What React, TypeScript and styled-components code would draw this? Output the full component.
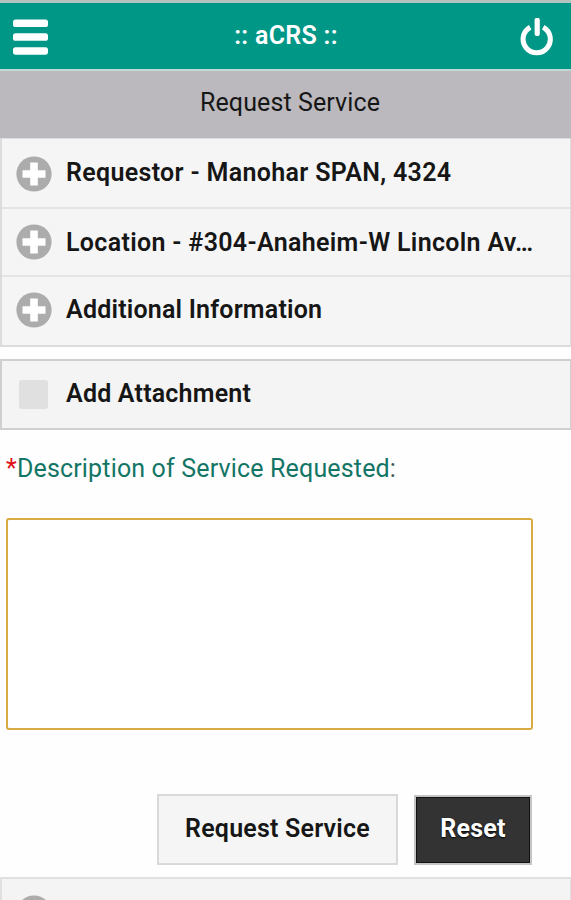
import { createGlobalStyle, styled } from "styled-components";

const sections = [
  {
    title: "Requestor - Manohar SPAN, 4324",
    height: 68,
    padding: "2px 36px 0 14px",
    lift: 4,
    spacing: 0.33,
  },
  {
    title: "Location - #304-Anaheim-W Lincoln Av…",
    height: 68,
    padding: "0 36px 0 14px",
    lift: 0,
    spacing: 0.33,
  },
  {
    title: "Additional Information",
    height: 70,
    padding: "0 36px 2px 14px",
    lift: 1,
    spacing: 0.2,
  },
];

const MenuIcon = () => (
  <svg width="36" height="36" viewBox="0 0 36 36" fill="#fff">
    <rect x="0" y="0.5" width="35" height="7.5" rx="2.6" />
    <rect x="0" y="14.3" width="35" height="7.5" rx="2.6" />
    <rect x="0" y="28.2" width="35" height="7.5" rx="2.6" />
  </svg>
);

const PowerIcon = () => (
  <svg width="34" height="38" viewBox="0 0 34 38" fill="none" stroke="#fff">
    <path d="M10.2 9.2A13.6 13.6 0 1 0 23.2 9.2" strokeWidth="5" />
    <path d="M17.2 2.3V15.5" strokeWidth="5.2" strokeLinecap="round" />
  </svg>
);

const PlusIcon = () => (
  <svg width="36" height="36" viewBox="0 0 36 36">
    <circle cx="18" cy="18" r="17.6" fill="#acacac" />
    <path d="M18 6.5V29.5M6.5 18H29.5" stroke="#fff" strokeWidth="7.6" />
  </svg>
);

const App = () => {
  return (
    <>
      <GlobalStyle />
      <Page>
        <Header>
          <IconButton aria-label="Menu">
            <MenuIcon />
          </IconButton>
          <Logo>:: aCRS ::</Logo>
          <IconButton aria-label="Log out">
            <PowerIcon />
          </IconButton>
        </Header>
        <PageTitle>Request Service</PageTitle>

        <SectionList>
          {sections.map(({ title, height, padding, lift, spacing }) => (
            <SectionRow key={title} $height={height} $padding={padding}>
              <PlusIcon />
              <RowText $lift={lift} $spacing={spacing}>
                {title}
              </RowText>
            </SectionRow>
          ))}
        </SectionList>

        <Attachment>
          <CheckBox />
          <RowText $lift={2} $spacing={0.2}>
            Add Attachment
          </RowText>
        </Attachment>

        <Label htmlFor="description">
          <Required>*</Required>Description of Service Requested
          <Colon>:</Colon>
        </Label>
        <Description id="description" />

        <Actions>
          <SubmitButton>Request Service</SubmitButton>
          <ResetButton>Reset</ResetButton>
        </Actions>

        <NextSection>
          <PlusIcon />
        </NextSection>
      </Page>
    </>
  );
};

export default App;

const GlobalStyle = createGlobalStyle`
  * {
    box-sizing: border-box;
  }

  body {
    margin: 0;
    background: #fefefe;
    font-family: Roboto, "Liberation Sans", sans-serif;
    font-size: 25px;
    letter-spacing: 0.2px;
    color: #161616;
    overflow: hidden;
  }
`;

const Page = styled.div`
  display: flex;
  flex-direction: column;
  height: 900px;
  overflow: hidden;
`;

const Header = styled.header`
  display: flex;
  flex-shrink: 0;
  align-items: center;
  justify-content: space-between;
  height: 71px;
  padding: 1px 17px 0 13px;
  border-top: 3px solid #b3c3bf;
  border-bottom: 2px solid #c3d9d6;
  background: #009787;
`;

const IconButton = styled.button`
  display: flex;
  padding: 0;
  border: none;
  background: none;
`;

const Logo = styled.h1`
  margin: 0 0 3px;
  padding-left: 3px;
  font-size: 25px;
  font-weight: 600;
  letter-spacing: 0.3px;
  color: #fff;
`;

const PageTitle = styled.h2`
  flex-shrink: 0;
  height: 67px;
  margin: 0;
  padding-left: 9px;
  background: #bbb9bd;
  font-size: 25px;
  font-weight: 400;
  line-height: 63px;
  letter-spacing: 0.1px;
  text-align: center;
`;

const SectionList = styled.div`
  flex-shrink: 0;
  height: 209px;
  border: 1px solid #dcdcdc;
  border-width: 1px 1px 2px 2px;
`;

const SectionRow = styled.div<{ $height: number; $padding: string }>`
  display: flex;
  align-items: center;
  gap: 14px;
  height: ${({ $height }) => $height}px;
  padding: ${({ $padding }) => $padding};
  background: #f5f5f5;

  & + & {
    border-top: 2px solid #e4e4e4;
  }
`;

const RowText = styled.span<{ $lift: number; $spacing: number }>`
  margin-bottom: ${({ $lift }) => $lift}px;
  font-weight: 600;
  letter-spacing: ${({ $spacing }) => $spacing}px;
  white-space: nowrap;
`;

const Attachment = styled.div`
  display: flex;
  flex-shrink: 0;
  align-items: center;
  gap: 18px;
  height: 71px;
  margin-top: 12px;
  padding-left: 17px;
  border: 2px solid #cfcfcf;
  border-right-width: 1px;
  background: #f4f4f4;
`;

const CheckBox = styled.span`
  width: 29px;
  height: 29px;
  border-radius: 3px;
  background: #e0e0e0;
`;

const Label = styled.label`
  flex-shrink: 0;
  height: 88px;
  padding: 24px 0 0 6px;
  line-height: 30px;
  letter-spacing: 0.16px;
  color: #137565;
`;

const Required = styled.span`
  color: #e00f16;
`;

const Colon = styled.span`
  color: #3d5550;
`;

const Description = styled.textarea`
  flex-shrink: 0;
  width: 527px;
  height: 212px;
  margin-left: 6px;
  border: 2px solid #d9aa42;
  border-radius: 3px;
  background: #fff;
  outline: none;
  resize: none;
`;

const Actions = styled.div`
  display: flex;
  flex-shrink: 0;
  align-items: center;
  justify-content: flex-end;
  gap: 16px;
  margin: 64px 39px 12px 0;
`;

const Button = styled.button`
  padding: 0 0 2px;
  font-family: inherit;
  font-size: 25px;
  font-weight: 600;
  letter-spacing: 0.2px;
`;

const SubmitButton = styled(Button)`
  width: 241px;
  height: 71px;
  border: 2px solid #d9d9d9;
  background: #f5f5f5;
  color: #161616;
`;

const ResetButton = styled(Button)`
  width: 118px;
  height: 70px;
  border: 2px solid #c4c4c4;
  background: #333;
  box-shadow: inset 0 0 0 1px #111;
  color: #fff;
  font-weight: 700;
  text-shadow: 0 1px 2px #000;
`;

const NextSection = styled.div`
  flex-shrink: 0;
  height: 70px;
  padding: 16px 0 0 14px;
  border: 2px solid #e0e0e0;
  border-right-width: 1px;
  background: #f4f4f4;
`;
